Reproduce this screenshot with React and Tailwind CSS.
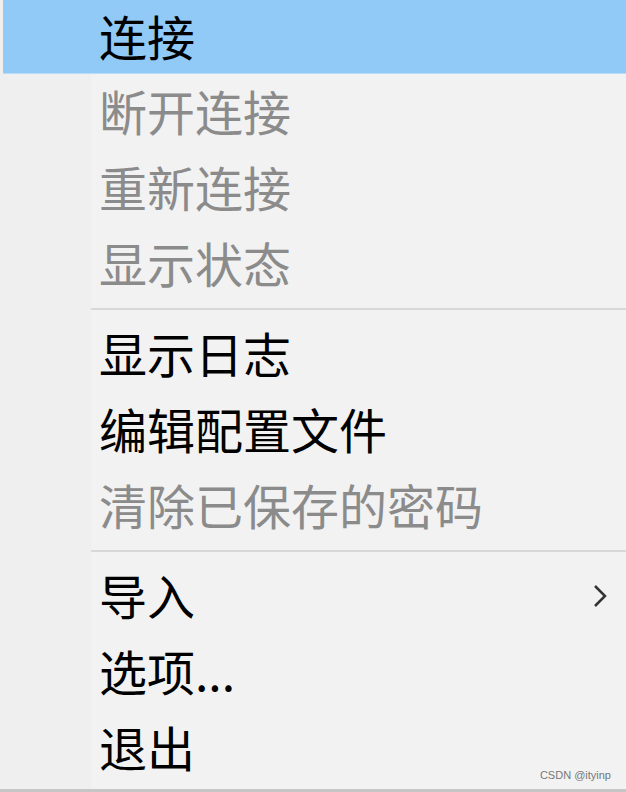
const items = [
  { label: '连接', active: true },
  { label: '断开连接', disabled: true },
  { label: '重新连接', disabled: true },
  { label: '显示状态', disabled: true },
  'sep',
  { label: '显示日志' },
  { label: '编辑配置文件' },
  { label: '清除已保存的密码', disabled: true },
  'sep',
  { label: '导入', submenu: true },
  { label: '选项...' },
  { label: '退出' },
];

function Chevron() {
  return (
    <svg width="16" height="26" viewBox="0 0 16 26" className="absolute right-[18px]">
      <path d="M3 3 L13 13 L3 23" fill="none" stroke="#333" strokeWidth="2.5" />
    </svg>
  );
}

function MenuItem({ item }) {
  const color = item.disabled ? 'text-[#8b8b8b]' : 'text-black';
  return (
    <div
      className={`relative flex items-center ${item.active ? 'h-[74px] ml-[3px] bg-[#91c9f7] border-b border-[#b9dcf9]' : 'h-[76px]'}`}
    >
      <span
        className={`${item.active ? 'pl-[96px]' : 'pl-[99px]'} pb-[4px] text-[48px] leading-none ${color}`}
      >
        {item.label}
      </span>
      {item.submenu && <Chevron />}
    </div>
  );
}

export default function App() {
  return (
    <div
      className="relative w-[626px] h-[792px] overflow-hidden bg-[linear-gradient(to_right,#efefef_91px,#f2f2f2_91px)] font-['Noto_Sans_CJK_SC','Microsoft_YaHei',sans-serif]"
    >
      <div className="flex flex-col">
        {items.map((item, i) =>
          item === 'sep' ? (
            <div key={i} className="h-[14px] flex items-center pl-[91px]">
              <div className="h-[2px] w-full bg-[#d8d8d8]" />
            </div>
          ) : (
            <MenuItem key={i} item={item} />
          )
        )}
      </div>

      {/* watermark */}
      <div className="absolute right-[15px] bottom-[9px] text-[11px] text-[#777] font-['Liberation_Sans',sans-serif]">
        CSDN @ityinp
      </div>
      <div className="absolute left-0 right-0 bottom-0 h-[3px] bg-[#c6c6c6]" />
    </div>
  );
}
